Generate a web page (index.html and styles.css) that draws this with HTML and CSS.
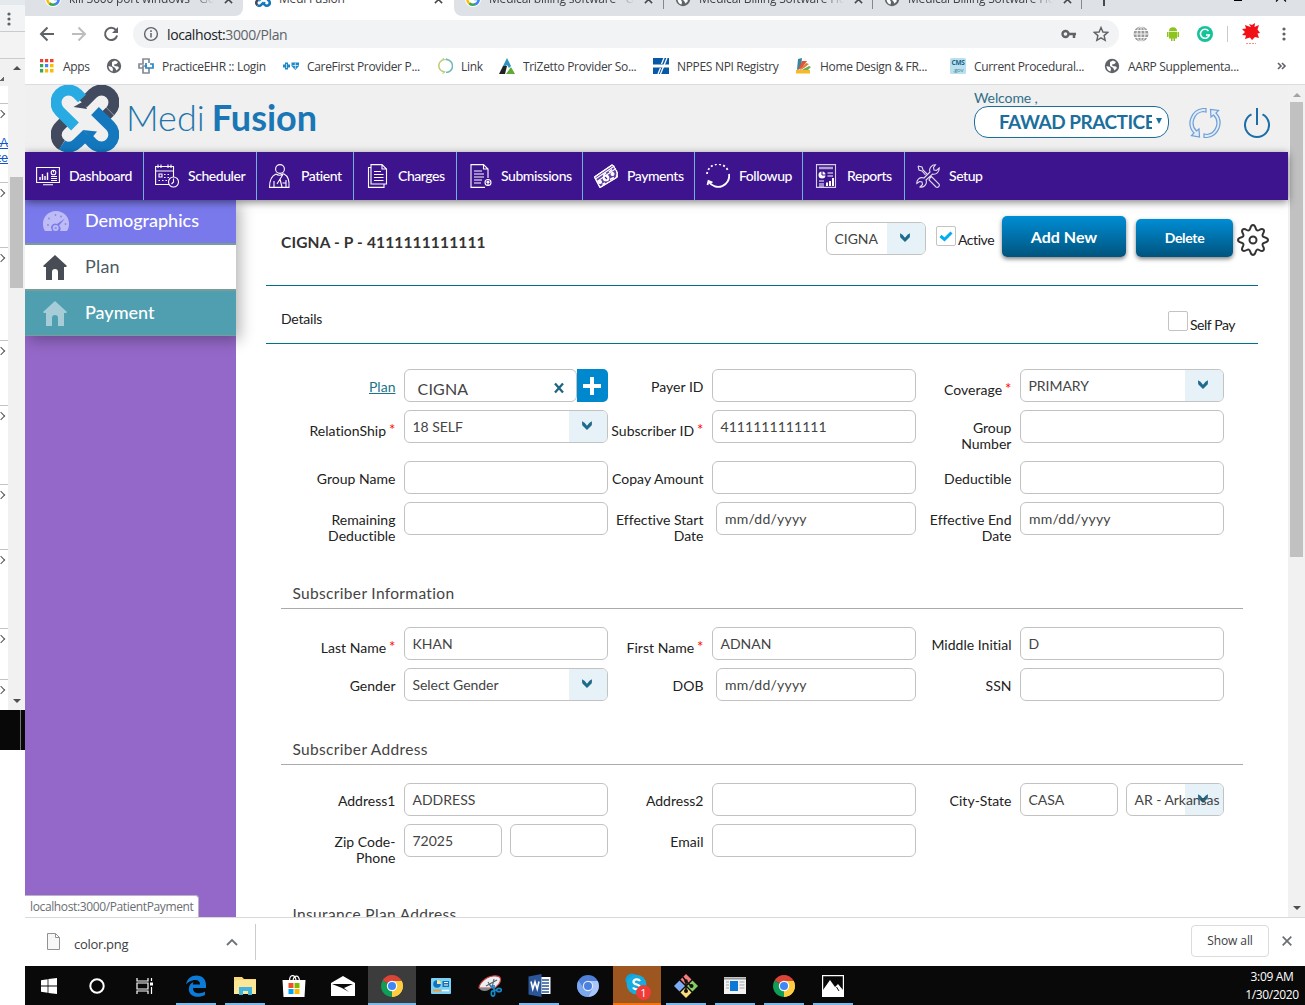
FILE: index.html
```html
<!DOCTYPE html>
<html lang="en">
<head>
<meta charset="utf-8">
<title>Medi Fusion</title>
<link rel="stylesheet" href="styles.css">
</head>
<body>
<svg class="defs" aria-hidden="true">
  <defs>
    <symbol id="chev" viewBox="0 0 12 10"><path d="M1 .3 L3.500 1.800 L6 4.800 L8.500 1.800 L11 .3 L10.800 4.200 L6 9 L1.200 4.200 Z" fill="#1f6b8c"/></symbol>
    <symbol id="globe" viewBox="0 0 16 16"><circle cx="8" cy="8" r="7.2" fill="#5f6368"/><path d="M2.5 8 L6 9 L7 11 L6.5 13.5 C4 13 2.5 10.5 2.500 8 Z M6 4 L9 2.500 L12 4 L10.500 6 L8 6.500 L8.500 8 L12 8.500 L13 10 L10.500 12.500 L9 9.800 L6 8 Z" fill="#fff"/></symbol>
    <symbol id="gsearch" viewBox="0 0 16 16"><circle cx="8" cy="8" r="8" fill="#fff"/><path d="M2.500 6.500 A6 6 0 0 0 6 13.500" stroke="#fbbc05" stroke-width="2.500" fill="none"/><path d="M4.500 12.500 A6 6 0 0 0 10.500 13.200" stroke="#34a853" stroke-width="2.500" fill="none"/><path d="M10 13.400 A6 6 0 0 0 13.800 8 H9" stroke="#4285f4" stroke-width="2.500" fill="none"/><path d="M3 6 A6 6 0 0 1 12 4" stroke="#ea4335" stroke-width="2.500" fill="none"/></symbol>
    <symbol id="close" viewBox="0 0 10 10"><path d="M1 1 L9 9 M9 1 L1 9" stroke="#45484c" stroke-width="1.700"/></symbol>
    <symbol id="mark" viewBox="0 0 68 67">
      <g fill="none" stroke-width="11">
        <path d="M59.300 26.300 A12.300 12.300 0 1 0 41.700 8.700 L32 18.500" stroke="#414a5e"/>
        <path d="M59 26.500 L52.500 33" stroke="#414a5e"/>
        <path d="M16.500 33.500 L9 41 A12 12 0 0 0 11 60" stroke="#414a5e"/>
        <path d="M31 13.500 L26.300 8.700 A12.300 12.300 0 1 0 8.700 26.300 L24 41.500" stroke="#28abe2"/>
        <path d="M44 26 L59.300 41 A12.300 12.300 0 1 1 41.700 58.300 L36 52.500" stroke="#1478bf"/>
        <path d="M11 60 A12 12 0 0 0 26.300 58.300 L36 49" stroke="#1478bf"/>
      </g>
      <path d="M22.500 22 L33 16 L36 24 Z" fill="#414a5e"/><path d="M32 45 L46 46.500 L40 54 Z" fill="#1478bf"/>
    </symbol>
    <symbol id="house" viewBox="0 0 24 25"><path d="M12 0 L24 11 L23 12 H21 V25 H15 V17 A3 3 0 0 0 9 17 V25 H3 V12 H1 L0 11 Z" fill="currentColor"/></symbol>
    <symbol id="chrome" viewBox="0 0 22 22"><path d="M11 11 L1.500 5.500 A11 11 0 0 1 20.500 5.500 Z" fill="#db4437"/><path d="M11 11 L20.500 5.500 A11 11 0 0 1 11 22 Z" fill="#ffcd40"/><path d="M11 11 V22 A11 11 0 0 1 1.500 5.500 Z" fill="#0f9d58"/><path d="M11 6 H20.700 A11 11 0 0 1 11 22 L15.500 13.500 Z" fill="#ffcd40"/><circle cx="11" cy="11" r="5.200" fill="#fff"/><circle cx="11" cy="11" r="4" fill="#4285f4"/></symbol>
  </defs>
</svg>
<div class="desktop">
  <aside class="behind">
    <div class="b-top"></div>
    <div class="b-tool"><svg width="6" height="14" viewBox="0 0 6 14" fill="#5f6368"><circle cx="3" cy="2" r="1.600"/><circle cx="3" cy="7" r="1.600"/><circle cx="3" cy="12" r="1.600"/></svg></div>
    <div class="b-gap"></div>
    <div class="b-page">
      <div class="b-list">
        <div class="b-corner"></div>
        <div class="b-head"></div>
        <div class="b-row r79"><i></i><span>eA</span><span>ze</span></div>
        <div class="b-row r65"><i></i></div>
        <div class="b-row r93"><i></i></div>
        <div class="b-row r65"><i></i></div>
        <div class="b-row r79"><i></i></div>
        <div class="b-row r65"><i></i></div>
        <div class="b-row r79"><i></i></div>
        <div class="b-row r51"><i></i></div>
        <div class="b-row r31"><i></i></div>
      </div>
      <div class="b-scroll"><b class="up"></b><div class="b-thumb"></div><b class="down"></b></div>
    </div>
    <div class="b-task"></div>
  </aside>

  <div class="window">
    <div class="tabstrip">
      <div class="tabs-left"><div class="tab"><svg><use href="#gsearch"/></svg><span class="fade t1">kill 3000 port windows - Goo</span><svg class="x"><use href="#close"/></svg></div></div>
      <div class="tab active"><svg><use href="#mark"/></svg><span>Medi Fusion</span><svg class="x"><use href="#close"/></svg></div>
      <div class="tabs-right">
        <div class="tab"><svg><use href="#gsearch"/></svg><span class="fade">Medical billing software - Go</span><svg class="x"><use href="#close"/></svg></div>
        <div class="tab sep"><svg><use href="#globe"/></svg><span class="fade">Medical Billing Software Hom</span><svg class="x"><use href="#close"/></svg></div>
        <div class="tab sep"><svg><use href="#globe"/></svg><span class="fade">Medical Billing Software Hom</span><svg class="x"><use href="#close"/></svg></div>
        <div class="newtab sep"><svg width="14" height="14"><path d="M7 0 V14 M0 7 H14" stroke="#45484c" stroke-width="2"/></svg></div>
        <div class="wincontrols"><svg width="60" height="10"><path d="M43 -1 L53 9 M53 -1 L43 9" transform="translate(0 .5)" stroke="#000" stroke-width="1.200" fill="none"/><path d="M1 8.500 H9" stroke="#000"/></svg></div>
      </div>
    </div>

    <div class="toolbar">
      <svg class="tb" viewBox="0 0 16 16"><path d="M15 8 H2 M8.500 1.500 L2 8 L8.500 14.500" fill="none" stroke="#5f6368" stroke-width="2"/></svg>
      <svg class="tb" viewBox="0 0 16 16"><path d="M1 8 H14 M7.500 1.500 L14 8 L7.500 14.500" fill="none" stroke="#bbbdc0" stroke-width="2"/></svg>
      <svg class="tb" viewBox="0 0 16 16"><path d="M13 4.200 A6.100 6.100 0 1 0 14.100 9.500" fill="none" stroke="#5f6368" stroke-width="2"/><path d="M15 1 V7 H9 Z" fill="#5f6368"/></svg>
      <div class="omnibox">
        <svg width="16" height="16" viewBox="0 0 16 16"><circle cx="8" cy="8" r="6.400" fill="none" stroke="#5f6368" stroke-width="1.400"/><path d="M8 7 V11.600 M8 4.300 V5.900" stroke="#5f6368" stroke-width="1.500"/></svg>
        <span class="url">localhost:<em>3000/Plan</em></span>
        <svg class="key" width="16" height="10" viewBox="0 0 16 10"><circle cx="4.500" cy="5" r="3" fill="none" stroke="#5f6368" stroke-width="2.400"/><path d="M7 5 H15 M13 5 V9" stroke="#5f6368" stroke-width="2.500"/></svg>
        <svg class="star" width="16" height="16" viewBox="0 0 16 16"><path d="M8 1.500 L9.900 6 L14.800 6.400 L11.100 9.600 L12.200 14.400 L8 11.900 L3.800 14.400 L4.900 9.600 L1.200 6.400 L6.100 6 Z" fill="none" stroke="#5f6368" stroke-width="1.400"/></svg>
      </div>
      <div class="exts">
        <svg viewBox="0 0 16 16" fill="none" stroke="#fff" stroke-width=".9"><circle cx="8" cy="8" r="7.500" fill="#9b9b9b" stroke="none"/><ellipse cx="8" cy="8" rx="4" ry="7.500"/><path d="M8 0 V16 M0 8 H16 M1 4.500 H15 M1 11.500 H15"/></svg>
        <svg viewBox="0 0 16 16" fill="#8fc31f"><path d="M4 6 V12.500 H6 V15 H7.500 V12.500 H8.500 V15 H10 V12.500 H12 V6 Z M2 6 H3.500 V11 H2 Z M12.500 6 H14 V11 H12.500 Z M4 5.300 A4 4 0 0 1 12 5.300 Z"/></svg>
        <svg viewBox="0 0 16 16"><circle cx="8" cy="8" r="8" fill="#15c39a"/><path d="M11.500 5 A4.500 4.500 0 1 0 12.300 9 H9" fill="none" stroke="#fff" stroke-width="1.600"/></svg>
        <i class="vline"></i>
        <svg class="flower" viewBox="0 0 20 22"><path d="M10 4 L8 1 L11 2 L14 0 L13.500 4 L18 2 L16.500 6.500 L19 10 L16.500 10.500 L18 15 L14 14 L11 17 L9 14.500 L4 16 L5 12.500 L1 12 L4 9 L1 6 L5 5.500 L4 2 L8 3.500 Z" fill="#f01016"/><path d="M5 20.500 H15" stroke="#ef8f90" stroke-dasharray="2 1"/></svg>
        <svg class="dots" viewBox="0 0 4 16" fill="#5f6368"><circle cx="2" cy="3" r="1.600"/><circle cx="2" cy="8" r="1.600"/><circle cx="2" cy="13" r="1.600"/></svg>
      </div>
    </div>

    <div class="bookmarks">
      <span><svg viewBox="0 0 16 16"><path d="M1 1h4v4H1zM6 1h4v4H6zM11 1h3.500v4H11z" fill="#ea4335"/><path d="M1 6h4v4H1zM1 11h4v3.500H1z" fill="#34a853"/><path d="M6 6h4v4H6z" fill="#4285f4"/><path d="M11 6h3.500v4H11zM6 11h4v3.500H6zM11 11h3.500v3.500H11z" fill="#fbbc05"/><path d="M5 0V16M10 0V16M0 5H16M0 10H16" stroke="#fff" stroke-width="1.600"/></svg>Apps</span>
      <span><svg><use href="#globe"/></svg></span>
      <span><svg viewBox="0 0 16 16" fill="none" stroke-width="1.700"><path d="M5 10 H1 V6 H5 V1 H11 V5" stroke="#868b92"/><path d="M11 10 V15 H5 V8 H9" stroke="#868b92"/><path d="M8 5 V10 H15 V6 H12" stroke="#2586c4"/></svg>PracticeEHR :: Login</span>
      <span><svg viewBox="0 0 16 16" fill="#1c87c9"><path d="M2 4.500h3v2h2v3H5v2H2v-2H0v-3h2z"/><path d="M8.500 4.500 H16 V8 L12.300 12 L8.500 8 Z"/><path d="M12.300 5 V11 M9.500 7.500 H15.500 M3.500 6 V10" stroke="#fff" stroke-width=".7"/></svg>CareFirst Provider P...</span>
      <span><svg viewBox="0 0 16 16" fill="none" stroke-width="1.500"><path d="M8 14 A6.300 6.300 0 0 1 7 1.500" stroke="#bccb74"/><path d="M9 1.500 A6.300 6.300 0 0 1 9 14.500" stroke="#6fbcb0"/><path d="M5.500 0 L8 2 L10.500 0 M5.500 16 L8 13.500" stroke="#a9cb8e" stroke-width="1"/></svg>Link</span>
      <span><svg viewBox="0 0 16 16"><path d="M8 0 L12 8 L10 10 L8 7 L6 9 L4 8 Z" fill="#2e93be"/><path d="M4 8 L8 8 L6 16 H0 Z" fill="#222"/><path d="M12 9 L16 16 H7 Z" fill="#5fa83a"/></svg>TriZetto Provider So...</span>
      <span><svg viewBox="0 0 16 16"><path d="M0 0 H16 V16 H0 Z" fill="#0759a5"/><path d="M0 8 H16" stroke="#fff" stroke-width="3"/><path d="M11 0 L8.500 6 M7.500 10 L5 16 M14 0 L7.500 16" stroke="#fff" stroke-width="1.300"/></svg>NPPES NPI Registry</span>
      <span><svg viewBox="0 0 16 16"><path d="M2 1 L6 0 L5 10 L1 12 Z" fill="#3587a0"/><path d="M6 3 L11 3 L6 10 L2 12 Z" fill="#dc573b"/><path d="M10 5 L13 6 L8 10 L3 13 Z" fill="#e27b3e"/><path d="M13 8 L15 9 L12 12 L4 13 Z" fill="#6daf55"/><path d="M0 12 H14 V15.500 H0 Z" fill="#f5b929"/></svg>Home Design &amp; FR...</span>
      <span><svg viewBox="0 0 16 16"><rect width="16" height="16" rx="1.500" fill="#b9e0ee"/><text x="8" y="7.300" font-size="6.500" font-weight="700" text-anchor="middle" fill="#1a6386" textLength="13">CMS</text><text x="8" y="13.500" font-size="6" text-anchor="middle" fill="#4c8198">.gov</text></svg>Current Procedural...</span>
      <span><svg><use href="#globe"/></svg>AARP Supplementa...</span>
      <svg class="more" viewBox="0 0 10 8"><path d="M1 1 L4 4 L1 7 M5 1 L8 4 L5 7" fill="none" stroke="#5f6368" stroke-width="1.600"/></svg>
    </div>

    <div class="viewport">
      <div class="page">
        <header class="brand">
          <svg class="mark"><use href="#mark"/></svg>
          <h1><span class="medi">Medi</span><b>Fusion</b></h1>
          <div class="account">
            <div class="welcome">Welcome ,</div>
            <div class="practice"><span>FAWAD PRACTICE</span><i></i></div>
          </div>
          <svg class="refresh" viewBox="0 0 32 32" fill="#e3edf9" stroke="#6f9fd6" stroke-width="1.200"><path d="M14 1.500 A14.600 14.600 0 0 0 5 26 L2.500 28.500 L10.500 30 L10 22 L7.500 24 A11.500 11.500 0 0 1 14 4.500 L17 5 V1.500 Z"/><path d="M18 30.500 A14.600 14.600 0 0 0 27 6 L29.500 3.500 L21.500 2.500 L22 10 L24.500 8 A11.500 11.500 0 0 1 18 27.500 L15 27 V30.500 Z"/></svg>
          <svg class="power" viewBox="0 0 26 30" fill="none" stroke="#1b6ea8" stroke-width="2"><path d="M13 0 V17 M7.500 6.300 A12 12 0 1 0 18.500 6.300"/></svg>
        </header>
        <nav class="mainnav">
          <a class="n1"><svg viewBox="0 0 24 24"><path d="M.6 3.500 H23.400 V18.500 H.6 Z M7 20.800 H17"/><path d="M4 16 V13 M6.500 16 V10 M9 16 V12 M11.500 16 V8.500" stroke-width="1.400"/><circle cx="17.500" cy="8.500" r="2.300"/><path d="M17.500 8.500 V6 M15 12.500 H21 M15 14.500 H21 M15 16.500 H21"/></svg><span>Dashboard</span></a>
          <a class="n2"><svg viewBox="0 0 24 24"><path d="M14 20.500 H.6 V2.500 H18.500 V13 M.6 7 H18.500 M3 .5 V4 M6 .5 V4 M13 .5 V4 M16 .5 V4"/><circle cx="18.500" cy="18" r="5"/><path d="M18.500 14.500 V18 L16.500 20"/><path d="M4 10 H7 V13 H4 Z"/><path d="M9 10.500 H16 M9 13.500 H14 M3.500 16.500 H12" stroke-dasharray="1.500 2"/></svg><span>Scheduler</span></a>
          <a class="n3"><svg viewBox="0 0 24 24"><circle cx="12" cy="5" r="4.400"/><path d="M8 10 C3 12 1.500 17 1.500 23.400 H21 C21.500 17 20 12 16 10 M8 10 C10 11.500 13 11.500 15.500 9.500 L9 20 M6 17 V23 M18 16 V23 M12 15 L14 23 M14.500 19 H18"/></svg><span>Patient</span></a>
          <a class="n4"><svg viewBox="0 0 24 24"><path d="M6 .6 H17 L21.500 5 V20 H6 Z M17 .6 V5 H21.500 M6 3.500 H3.500 V23.400 H19 V20"/><path d="M9 7.500 H16 M9 10.500 H18.500 M9 13.500 H18.500 M9 16.500 H18.500"/></svg><span>Charges</span></a>
          <a class="n5"><svg viewBox="0 0 24 24"><path d="M17 23.400 H3 V.6 H15.500 L20 5 V14 M15.500 .6 V5 H20"/><path d="M6 7 H14 M6 10 H16 M6 13 H16 M6 16 H14 M6 19 H13"/><circle cx="20" cy="18.500" r="3"/><path d="M20 22 V17 M18.500 18.500 L20 17 L21.500 18.500"/></svg><span>Submissions</span></a>
          <a class="n6"><svg viewBox="0 0 24 24" stroke-width=".8"><path d="M.5 13 L18 1 L19.500 2 L23.500 9 L22 14 L6 23.500 Z" fill="#fff" fill-opacity=".18"/><path d="M.5 13 L18.500 .7 M1.500 15 L20.500 2 M3 17.500 L22 4.500 M6 23.500 L23.500 13 L22.500 6 M.5 13 L6 23.500"/><circle cx="12" cy="14" r="2.800" fill="#fff"/><path d="M11 13 L13 15" stroke="#3d148e"/><circle cx="6" cy="18" r="1.500" fill="#fff"/><circle cx="18.500" cy="10" r="1.500" fill="#fff"/><path d="M8.500 20.500 L11 19 M16 15.500 L20 13.500 M9 11.500 L12 9 M15 8 L18 5.500" stroke-width="1.600"/></svg><span>Payments</span></a>
          <a class="n7"><svg class="bold" viewBox="0 0 24 24"><path d="M1 10 A11 11 0 0 1 22.500 8" stroke-dasharray="2 2.300"/><path d="M23 10 A11 11 0 0 1 3 18 M1.500 21 L2.500 17 L6.500 18.500"/></svg><span>Followup</span></a>
          <a class="n8"><svg viewBox="0 0 24 24"><path d="M2.500 .6 H21.500 V23.400 H2.500 Z" stroke-opacity=".8"/><path d="M5 4 H19" stroke-width="2.500" stroke-opacity=".6"/><circle cx="8" cy="11" r="3.500" fill="#fff" stroke="none"/><path d="M8 11 V7 M8 11 H12" stroke="#3d148e"/><path d="M13.500 9 H19 M13.500 12 H19 M5 17 H10 M5 20 H10 M5 22 H10"/><path d="M13 22 V18.500 M16 22 V17 M19 22 V14" stroke-width="2"/></svg><span>Reports</span></a>
          <a class="n9"><svg viewBox="0 0 24 24"><path d="M2 2 L6 3 L7 6 L11 10 M2 2 L3 6 L6 7 L9.500 11 M14 14 L15.500 12.500 L23 20 A2.200 2.200 0 0 1 20 23 L13 16 Z M19.500 .8 C16 .5 12.500 4 14 8 L8 14 C3.500 12.500 .5 16 .8 19.500 L3.500 17.500 L6 18 L6.500 20.500 L4 23 C8.500 24 11.500 19.500 10 16 L16.500 10 C20 11 23.500 8 23.200 4 L20.500 6.500 L18 6 L17.500 3.500 Z" stroke-opacity=".85"/></svg><span>Setup</span></a>
        </nav>
        <div class="below">
          <div class="sidebar">
            <div class="menu">
              <a class="m1"><svg class="gauge" viewBox="0 0 26 21" fill="#fff" fill-opacity=".5"><path fill-rule="evenodd" d="M2 20 C-1.500 14 0 8 3 4.500 C8 -1.500 18 -1.500 23 4.500 C26 8 27.500 14 24 20 H17 A4.500 4.500 0 0 0 16 14.500 L22 7.500 L14 13 A4 4 0 0 0 9 19 V20 Z"/><g fill="#5552b8"><circle cx="5" cy="14" r=".9"/><circle cx="6" cy="7.500" r=".9"/><circle cx="12.500" cy="4" r=".9"/><circle cx="18" cy="5.500" r=".9"/><circle cx="22.500" cy="13" r=".9"/></g><circle cx="12.700" cy="17" r="3"/><circle cx="12.700" cy="17" r="1.200" fill="#6d68dd"/></svg><span>Demographics</span></a>
              <a class="m2"><svg><use href="#house"/></svg><span>Plan</span></a>
              <a class="m3"><svg><use href="#house"/></svg><span>Payment</span></a>
            </div>
          </div>
          <main>
            <section class="titlebar">
              <h2>CIGNA - P - 4111111111111</h2>
              <div class="field select plansel">CIGNA<i><svg><use href="#chev"/></svg></i></div>
              <label class="check act"><b><svg viewBox="0 0 14 11"><path d="M1.500 5 L5.500 8.500 L12.500 1.500" fill="none" stroke="#00adef" stroke-width="3"/></svg></b>Active</label>
              <div class="btn add">Add New</div>
              <div class="btn del">Delete</div>
              <svg class="gear" viewBox="0 0 32 32" fill="none" stroke="#333" stroke-width="2"><path d="M13.200 4.500 C13.800 2.200 14.800 1 16 1 S18.200 2.200 18.800 4.500 C19.400 6.700 20.600 6.900 22.200 6 C24 4.900 25.600 4.900 26.400 5.600 S27.100 8 26 9.800 C25.100 11.400 25.300 12.600 27.500 13.200 C29.800 13.800 31 14.800 31 16 S29.800 18.200 27.500 18.800 C25.300 19.400 25.100 20.600 26 22.200 C27.100 24 27.100 25.600 26.400 26.400 S24 27.100 22.200 26 C20.600 25.100 19.400 25.300 18.800 27.500 C18.200 29.800 17.200 31 16 31 S13.800 29.800 13.200 27.500 C12.600 25.300 11.400 25.100 9.800 26 C8 27.100 6.400 27.100 5.600 26.400 S4.900 24 6 22.200 C6.900 20.600 6.700 19.400 4.500 18.800 C2.200 18.200 1 17.200 1 16 S2.200 13.800 4.500 13.200 C6.700 12.600 6.900 11.400 6 9.800 C4.900 8 4.900 6.400 5.600 5.600 S8 4.900 9.800 6 C11.400 6.900 12.600 6.700 13.200 4.500 Z"/><circle cx="16" cy="16" r="3.500"/></svg>
            </section>
            <section class="details"><span>Details</span><label class="check"><b></b>Self Pay</label></section>

            <div class="grid first">
              <label><a>Plan</a></label><div class="combo"><div class="field big">CIGNA<svg viewBox="0 0 12 12"><path d="M2 1.500 L10 10.500 M10 1.500 L2 10.500" stroke="#1f6484" stroke-width="2.300"/></svg></div><div class="plus"><svg viewBox="0 0 18 18"><path d="M9 0 V18 M0 9 H18" stroke="#fff" stroke-width="4"/></svg></div></div>
              <label>Payer ID</label><div class="field"></div>
              <label class="req">Coverage<sup>*</sup></label><div class="field select">PRIMARY<i><svg><use href="#chev"/></svg></i></div>
              <label class="req">RelationShip<sup>*</sup></label><div class="field select">18 SELF<i><svg><use href="#chev"/></svg></i></div>
              <label class="req">Subscriber ID<sup>*</sup></label><div class="field num">4111111111111</div>
              <label class="two">Group<br>Number</label><div class="field"></div>
              <label>Group Name</label><div class="field"></div>
              <label>Copay Amount</label><div class="field"></div>
              <label>Deductible</label><div class="field"></div>
              <label class="two">Remaining<br>Deductible</label><div class="field"></div>
              <label class="two">Effective Start<br>Date</label><div class="field date short">mm/dd/yyyy</div>
              <label class="two">Effective End<br>Date</label><div class="field date">mm/dd/yyyy</div>
            </div>

            <h3>Subscriber Information</h3>
            <div class="grid">
              <label class="req">Last Name<sup>*</sup></label><div class="field">KHAN</div>
              <label class="req">First Name<sup>*</sup></label><div class="field">ADNAN</div>
              <label>Middle Initial</label><div class="field">D</div>
              <label>Gender</label><div class="field select">Select Gender<i><svg><use href="#chev"/></svg></i></div>
              <label>DOB</label><div class="field date short">mm/dd/yyyy</div>
              <label>SSN</label><div class="field"></div>
            </div>

            <h3>Subscriber Address</h3>
            <div class="grid">
              <label>Address1</label><div class="field">ADDRESS</div>
              <label>Address2</label><div class="field"></div>
              <label>City-State</label><div class="pair"><div class="field">CASA</div><div class="field select over"><span>AR - Arkansas</span><i><svg><use href="#chev"/></svg></i></div></div>
              <label class="two">Zip Code-<br>Phone</label><div class="pair"><div class="field">72025</div><div class="field"></div></div>
              <label>Email</label><div class="field"></div>
            </div>
            <h3>Insurance Plan Address</h3>
          </main>
        </div>
      </div>
      <div class="scrollbar"><b class="up"></b><div class="thumb"></div><b class="down"></b></div>
      <div class="status">localhost:3000/PatientPayment</div>
    </div>

    <footer class="downloads">
      <svg class="file" viewBox="0 0 13 17"><path d="M.5 .5 H8.500 L12.500 4.500 V16.500 H.5 Z M8.500 .5 V4.500 H12.500" fill="#f7f7f7" stroke="#909396"/></svg>
      <span class="fname">color.png</span>
      <svg class="caret" viewBox="0 0 12 8"><path d="M1 7 L6 2 L11 7" fill="none" stroke="#6f7377" stroke-width="1.800"/></svg>
      <i class="divider"></i>
      <div class="showall">Show all</div>
      <svg class="dx" viewBox="0 0 10 10"><path d="M.7 .7 L9.300 9.300 M9.300 .7 L.7 9.300" stroke="#6b6f73" stroke-width="1.700"/></svg>
    </footer>

    <div class="taskbar">
      <div class="cell"><svg width="16" height="16" viewBox="0 0 16 16" fill="#fff"><path d="M0 2.200 L6.600 1.200 V7.600 H0 Z M7.400 1.100 L16 0 V7.600 H7.400 Z M0 8.400 H6.600 V14.800 L0 13.800 Z M7.400 8.400 H16 V16 L7.400 14.900 Z"/></svg></div>
      <div class="cell"><svg width="16" height="16"><circle cx="8" cy="8" r="6.700" fill="none" stroke="#fff" stroke-width="2"/></svg></div>
      <div class="cell gapafter"><svg width="18" height="16" viewBox="0 0 18 16" fill="none" stroke="#fff" stroke-width="1.200"><path d="M1 0 V3 H12 V0 M1 5 H12 V11 H1 Z M1 16 V13 H12 V16 M15.500 0 V3 M15.500 9 V16"/><path d="M14 4.500 H17 V7.500 H14 Z" fill="#fff" stroke="none"/></svg></div>
      <div class="cell run"><svg width="22" height="22" viewBox="0 0 22 22"><path d="M1 9.500 C2 3.500 6.500 .5 11.500 .5 C17.500 .5 21 4.500 21 10 V13 H8 C8 17 11 18.300 14 18.300 C16.500 18.300 18.500 17.500 20 16.600 V20 C18 21.200 15.500 21.800 13 21.800 C7 21.800 3.800 18.500 3.800 14 C3.800 10.500 6 8 8.500 7 C8 8 7.900 9 7.900 9.500 H15 C15 6.500 13.500 5 10.500 5 C6 5 2.500 7.500 1 9.500 Z" fill="#0a7bd8"/></svg></div>
      <div class="cell run"><svg width="22" height="20" viewBox="0 0 22 20"><path d="M0 1 H8 L10 3 H22 V18 H0 Z" fill="#f8d775"/><path d="M2 4 H22 V18 H0 V6 Z" fill="#fce697"/><path d="M5 19 V11 H18 V19 H14 V15 H9 V19 Z" fill="#3fb4e2"/></svg></div>
      <div class="cell"><svg width="24" height="24" viewBox="0 0 24 24"><path d="M7.500 7 C7.500 0 13 0 14 6 M11 7 C11.500 1 17 0 17.500 7" fill="none" stroke="#fff" stroke-width="1.200"/><path d="M.5 6 H23.500 L22.500 23 H1.500 Z" fill="#fff"/><path d="M6.500 9h5v5h-5z" fill="#f25022"/><path d="M12.500 9h5v5h-5z" fill="#7fba00"/><path d="M6.500 15h5v5h-5z" fill="#00a4ef"/><path d="M12.500 15h5v5h-5z" fill="#ffb900"/></svg></div>
      <div class="cell"><svg width="24" height="20" viewBox="0 0 24 20"><path d="M0 7 L12 0 L24 7 V20 H0 Z" fill="#fff"/><path d="M1 8 L22 8 L13 12 L18 16 L11 12 Z" fill="#0b0b0b"/></svg></div>
      <div class="cell current"><svg width="22" height="22"><use href="#chrome"/></svg></div>
      <div class="cell"><svg width="20" height="16" viewBox="0 0 20 16"><rect width="20" height="16" rx="1" fill="#7cd2f5"/><circle cx="6" cy="6" r="3.800" fill="#0d74c4"/><path d="M6 6 V2 A4 4 0 0 1 10 6 Z" fill="#ffe196"/><path d="M11.500 3 H18 V9 H11.500 Z" fill="#1471b5"/><path d="M13 4.500 H17 M13 7 H17" stroke="#fff"/><path d="M2 12.500 H10" stroke="#f39a36" stroke-width="2"/><path d="M11 12.500 H18" stroke="#fff" stroke-width="1.500"/></svg></div>
      <div class="cell"><svg width="24" height="22" viewBox="0 0 24 22"><path d="M1 13 C1 9 7 2 15 1 C23 0 24 4 21 9 L17 13 H4 Z" fill="#eceff1" stroke="#c9403c" stroke-width="1.200"/><path d="M1 13 C3 17 10 17 13 13 Z" fill="#85898d"/><path d="M8 11 L19 5 M14 13 L16 4 M13 12 L10 7" stroke="#585e63" stroke-width="1.100"/><g fill="none" stroke="#1688c8" stroke-width="1.700"><path d="M12 10 L18 16 M16 10 V16"/><ellipse cx="15" cy="18.500" rx="1.700" ry="2.600"/><ellipse cx="21" cy="15" rx="2.300" ry="1.700"/></g></svg></div>
      <div class="cell run"><svg width="23" height="23" viewBox="0 0 23 23"><path d="M12 3 H22.500 V20 H12 Z" fill="#fff"/><path d="M14 6 H21 M14 9 H21 M14 12 H21 M14 15 H21 M14 18 H21" stroke="#2b579a" stroke-width="1.300"/><path d="M.5 2.500 L13.500 0 V23 L.5 20.500 Z" fill="#2b579a"/><path d="M3 7.500 L4.800 15 L7 8 L9.200 15 L11 7.500" fill="none" stroke="#fff" stroke-width="1.600"/></svg></div>
      <div class="cell"><svg width="22" height="22" viewBox="0 0 22 22"><circle cx="11" cy="11" r="11" fill="#4f7fd9"/><path d="M11 6 H20.700 A11 11 0 0 1 11 22 L15.500 13.500 Z" fill="#a9c7fa"/><path d="M1.500 5.500 A11 11 0 0 0 11 22 L15 14 L6.500 13 Z" fill="#7ba7ef"/><circle cx="11" cy="11" r="5.200" fill="#e1ebfc"/><circle cx="11" cy="11" r="4" fill="#4b81dc"/></svg></div>
      <div class="cell alert"><svg width="24" height="24" viewBox="0 0 24 24"><circle cx="7" cy="7" r="6.500" fill="#0fa1dc"/><circle cx="15.500" cy="16" r="6.500" fill="#0fa1dc"/><circle cx="11.500" cy="11.500" r="9.800" fill="#16acdf"/><path d="M15 8 C13.500 5.500 8.500 6 8.500 9 C8.500 12 15 11 15 14 C15 17 9.500 17 8 14.500" fill="none" stroke="#fff" stroke-width="2.300"/></svg><span class="badge">1</span></div>
      <div class="cell run"><svg width="24" height="24" viewBox="0 0 24 24"><path d="M12 0 L17.500 5.500 L12 11 L6.500 5.500 Z" fill="#f27d7b"/><path d="M5.500 6.500 L11 12 L5.500 17.500 L0 12 Z" fill="#7fabf5"/><path d="M18.500 6.500 L24 12 L18.500 17.500 L13 12 Z" fill="#86cd63"/><path d="M12 13 L17.500 18.500 L12 24 L6.500 18.500 Z" fill="#fadb7b"/><path d="M8 2 L12 7 V17 M12 7 L17 12" fill="none" stroke="#111" stroke-width="1.600"/><g fill="#111"><circle cx="12" cy="7" r="1.800"/><circle cx="12" cy="17" r="2"/><circle cx="17.500" cy="12" r="2"/></g></svg></div>
      <div class="cell run"><svg width="22" height="17" viewBox="0 0 22 17"><path d="M0 0 H22 V17 H0 Z" fill="#f2f2f2"/><path d="M0 1.500 H22" stroke="#989898" stroke-width="2"/><path d="M6 4 H14 V14 H6 Z" fill="#0a78d7"/><path d="M2 5 H5 M2 8 H5 M2 11 H5 M15.500 5 H20.500 M15.500 8 H20.500 M15.500 11 H20.500" stroke="#a5a5a5"/></svg></div>
      <div class="cell run"><svg width="22" height="22"><use href="#chrome"/></svg></div>
      <div class="cell run"><svg width="22" height="22" viewBox="0 0 22 22"><path d="M.6 .6 H21.400 V21.400 H.6 Z" fill="#080808" stroke="#fff" stroke-width="1.200"/><path d="M1 15 L8 5 L13 12 L16 9 L21 15 V21 H1 Z" fill="#fff"/><path d="M14.500 12 L17 16" stroke="#080808"/></svg></div>
      <div class="clock"><div>3:09 AM</div><div>1/30/2020</div></div>
    </div>
  </div>
</div>
</body>
</html>
```
FILE: styles.css
```css
* { box-sizing: border-box; }
body { margin: 0; width: 1305px; height: 1005px; overflow: hidden; background: #fff; font-family: Lato, "Liberation Sans", sans-serif; color: #222; }
svg { display: block; flex: none; }
.defs { width: 0; height: 0; position: absolute; }
.desktop { display: flex; height: 1005px; }

/* window partly covered on the left */
.behind { width: 25px; flex: none; display: flex; flex-direction: column; overflow: hidden; }
.b-top { height: 5px; background: #e4e9ed; }
.b-tool { height: 27px; background: #f1f3f4; border-bottom: 1px solid #c9cbcd; padding: 7px 0 0 6px; }
.b-gap { height: 27px; background: #f3f3f3; border-bottom: 1px solid #c9cbcd; }
.b-page { height: 651px; display: flex; }
.b-list { width: 8px; overflow: hidden; }
.b-corner { height: 27px; background: linear-gradient(135deg, transparent 50%, #666 50%) no-repeat 0 18px / 4px 4px #f1f1f1; }
.b-head { height: 17px; }
.b-row { border-top: 1px solid #c4c4c4; overflow: hidden; }
.b-row i { display: block; width: 6px; height: 6px; margin: 7px 0 0 -2px; border: solid #555; border-width: 1px 1px 0 0; transform: rotate(45deg); }
.b-row span { display: flex; justify-content: flex-end; width: 8px; font: 12px/15px "Liberation Sans", sans-serif; color: #1155cc; text-decoration: line-through underline; }
.b-row i + span { margin-top: 19px; }
.r79 { height: 79px; } .r65 { height: 65px; } .r93 { height: 93px; } .r51 { height: 51px; } .r31 { height: 31px; }
.b-scroll { width: 17px; background: #f1f1f1; display: flex; flex-direction: column; align-items: center; padding: 7px 0; }
.b-thumb { width: 13px; height: 111px; background: #c1c1c1; margin: 107px 0 auto; }
.up, .down { width: 0; height: 0; border: solid transparent; border-width: 0 4px; }
.up { border-bottom: 4px solid #505050; }
.down { border-top: 4px solid #505050; }
.b-task { height: 40px; background: linear-gradient(90deg, #080808 20px, #777 20px 21px, #080808 21px); }

.window { width: 1280px; display: flex; flex-direction: column; }
.tabstrip, .toolbar, .bookmarks, .omnibox, .status, .downloads, .taskbar { font-family: "Open Sans", "Noto Sans", sans-serif; }

/* tabs: the upper half of the strip lies above the screen edge */
.tabstrip { display: flex; height: 34px; margin-top: -18px; background: #fff; flex: none; font-size: 12px; color: #3f4246; letter-spacing: -.2px; }
.tabs-left { width: 218px; background: #dee1e6; border-radius: 0 0 8px 0; padding-left: 10px; }
.tabs-right { width: 851px; background: #dee1e6; border-radius: 0 0 0 8px; display: flex; padding-left: 1px; }
.tab { width: 208px; height: 34px; display: flex; align-items: center; padding-left: 10px; flex: none; }
.tab.active { width: 211px; padding-left: 12px; }
.tab.sep { width: 209px; padding-left: 12px; }
.tab svg { width: 16px; height: 16px; margin-right: 8px; }
.tab span { width: 145px; white-space: nowrap; overflow: hidden; line-height: 20px; }
.tab svg.x { width: 9px; height: 9px; margin: 0 0 0 10px; }
.fade { -webkit-mask-image: linear-gradient(90deg, #000 85%, transparent); mask-image: linear-gradient(90deg, #000 85%, transparent); }
.sep { background: linear-gradient(#85888c, #85888c) no-repeat 0 0 / 1px 27px; }
.newtab { width: 60px; height: 34px; padding: 10px 0 0 16px; }
.wincontrols { padding: 10px 0 0 92px; }

/* toolbar */
.toolbar { height: 36px; flex: none; display: flex; align-items: center; padding: 4px 19px 4px 14px; background: #fff; }
.tb { width: 16px; height: 16px; margin-right: 16px; }
.omnibox { width: 987px; height: 28px; margin-left: -2px; border-radius: 14px; background: #f1f3f4; display: flex; align-items: center; padding: 0 10px; font-size: 14px; letter-spacing: -.4px; color: #202124; }
.url { flex: 1; padding-left: 8px; }
.url em { font-style: normal; color: #5f6368; }
.key { margin-right: 16px; }
.exts { display: flex; align-items: center; padding-left: 14px; }
.exts svg { width: 16px; height: 16px; margin-right: 16px; }
.vline { width: 1px; height: 16px; background: #c8cacc; margin-right: 13px; margin-left: -2px; }
.exts .flower { width: 20px; height: 22px; margin-right: 21px; }
.exts .dots { width: 4px; height: 16px; margin: 0; }

.bookmarks { height: 33px; flex: none; border-bottom: 1px solid #dadce0; padding: 0 0 4px 14px; display: grid; grid-template-columns: 67px 32px 145px 154px 62px 154px 143px 154px 154px 173px 12px; align-items: center; font-size: 12px; letter-spacing: -.32px; color: #3c4043; }
.bookmarks span { display: flex; align-items: center; white-space: nowrap; }
.bookmarks span svg { width: 16px; height: 16px; margin-right: 8px; }
.bookmarks .more { width: 10px; height: 8px; }

/* page */
.viewport { height: 832px; flex: none; display: flex; position: relative; overflow: hidden; }
.page { width: 1263px; }
.brand { height: 67px; background: #f0f0f0; display: flex; padding-left: 26px; }
.mark { width: 68px; height: 67px; }
h1 { margin: 10px 0 0 7px; width: 848px; font-size: 36px; line-height: 44px; font-weight: 300; color: #1f75aa; display: flex; gap: 7px; }
h1 b { font-weight: 700; color: #1a76b5; }
.account { width: 195px; color: #2f6f88; font-size: 14px; }
.welcome { height: 21px; line-height: 25px; letter-spacing: -.1px; }
.practice { height: 32px; border: 1px solid #1b6d9c; border-radius: 14px; background: #fff; display: flex; align-items: center; padding: 0 0 2px 24px; font-size: 19px; font-weight: 700; color: #1b6f9c; letter-spacing: -.5px; }
.practice span { width: 153px; overflow: hidden; white-space: nowrap; }
.practice i { border: solid transparent; border-width: 0 3px; border-top: 6px solid #1b6f9c; margin-left: 4px; }
.refresh { width: 32px; height: 32px; margin: 22px 22px 0 20px; }
.power { width: 26px; height: 30px; margin-top: 23px; margin-left: 1px; }

.mainnav { height: 48px; background: #3d148e; display: flex; box-shadow: 0 2px 8px rgba(0, 0, 0, .5); position: relative; z-index: 2; }
.mainnav a { display: flex; align-items: center; gap: 9px; padding-left: 11px; border-right: 1px solid #6fb3d9; color: #fff; font-size: 14px; font-weight: 500; white-space: nowrap; letter-spacing: -.45px; }
.mainnav span { margin-top: -2px; }
.mainnav svg { width: 24px; height: 24px; fill: none; stroke: #fff; stroke-width: 1.100; }
.mainnav svg.bold { stroke-width: 1.800; }
.n1 { width: 119px; } .n2 { width: 113px; } .n3 { width: 97px; } .n4 { width: 103px; } .n5 { width: 126px; } .n6 { width: 112px; } .n7 { width: 108px; } .n8 { width: 102px; }
.mainnav .n9 { border: 0; }

.below { display: flex; height: 717px; }
.sidebar { width: 211px; background: #9468c8; flex: none; }
.menu { box-shadow: 4px 4px 14px rgba(0, 0, 0, .3); }
.menu a { display: flex; align-items: center; height: 46px; border-bottom: 2px solid #789d97; padding-left: 18px; font-size: 18px; font-weight: 500; color: #fff; }
.menu svg { width: 24px; height: 25px; margin-right: 18px; }
.menu span { margin-top: -2px; }
.menu .gauge { width: 26px; height: 21px; margin-right: 16px; }
.menu .m1 { height: 45px; background: #7a79ec; padding-bottom: 1px; }
.menu .m2 { background: #fff; color: #4b5b66; font-weight: 400; letter-spacing: .2px; }
.m2 svg { color: #474c55; }
.menu .m3 { height: 45px; border-bottom-width: 1px; background: #4f9fb1; }
.m3 svg { color: #a6cdd7; }

main { width: 1052px; padding: 0 30px; }
.titlebar { height: 86px; border-bottom: 1px solid #00708f; display: flex; align-items: flex-start; padding-left: 15px; }
h2 { margin: 32px 0 0; width: 545px; font-size: 15.500px; line-height: 20px; font-weight: 700; color: #333; letter-spacing: .15px; }
.plansel { width: 100px; margin-top: 22px; }
.check { display: flex; font-size: 14px; line-height: 28px; gap: 2px; color: #222; letter-spacing: -.45px; }
.check b { width: 20px; height: 20px; border: 1px solid #c3c3c3; border-radius: 2px; background: #fff; }
.check b svg { width: 14px; height: 11px; margin: 4px 0 0 2px; }
.act { margin: 26px 0 0 10px; width: 66px; }
.btn { background: linear-gradient(#008dd5, #00547d); border-radius: 5px; box-shadow: 0 2px 4px rgba(0, 0, 0, .5); color: #fff; font-weight: 700; display: flex; align-items: center; justify-content: center; }
.add { width: 124px; height: 41px; margin-top: 16px; font-size: 16px; }
.del { width: 97px; height: 38px; margin: 19px 0 0 10px; font-size: 14px; letter-spacing: -.3px; padding-bottom: 1px; }
.gear { width: 32px; height: 32px; margin: 24px -20px 0 4px; }
.details { height: 58px; border-bottom: 1px solid #00708f; display: flex; justify-content: space-between; padding: 25px 23px 0 15px; font-size: 14px; line-height: 16px; letter-spacing: -.2px; }

.grid { margin-left: 34px; display: grid; grid-template-columns: repeat(3, 104px 204px); row-gap: 8px; font-size: 14px; align-items: start; }
.grid.first { margin-top: 25px; }
.grid label { height: 33px; text-align: right; padding: 10px 8.500px 0 0; line-height: 16px; white-space: nowrap; color: #222; letter-spacing: .02px; }
.grid label.req { padding-top: 13px; }
.grid label a { color: #1b7489; text-decoration: underline; }
.grid label.two { height: 42px; }
.grid.first label.two { height: 43px; }
sup { color: #f00; font-size: 15px; line-height: 0; vertical-align: 1px; margin-left: 3px; }
.field { height: 33px; border: 1px solid #c2c2c2; border-radius: 6px; padding-left: 7.500px; font-size: 14px; line-height: 31px; color: #444; background: #fff; position: relative; overflow: hidden; white-space: nowrap; }
.num { letter-spacing: .05px; }
.select { display: flex; justify-content: space-between; letter-spacing: -.05px; }
.select i { width: 38px; background: #e7f2f8; padding: 10px 0 0 12px; }
.select i svg { width: 12px; height: 10px; }
.short { margin-left: 4px; }
.date { letter-spacing: .22px; padding-left: 8px; }
.combo { display: flex; }
.big { width: 173px; font-size: 16px; line-height: 38px; padding: 0 11px 0 12.500px; display: flex; justify-content: space-between; letter-spacing: .2px; }
.big svg { width: 12px; height: 12px; margin: 12px 0 0; }
.plus { width: 31px; height: 33px; background: #0088cf; border-radius: 0 5px 5px 0; padding: 8px 0 0 6px; }
.plus svg { width: 18px; height: 18px; }
.pair { display: grid; grid-template-columns: 98px 98px; gap: 8px; }
.over span { position: relative; z-index: 1; }
.over i { position: absolute; right: 0; top: 0; height: 31px; }

h3 { margin: 36px 0 18px 15px; width: 962px; height: 28px; padding-left: 11.500px; border-bottom: 1px solid #aaa; font-size: 15.500px; line-height: 24px; font-weight: 400; color: #444; letter-spacing: .33px; }

.scrollbar { width: 17px; background: #f1f1f1; display: flex; flex-direction: column; align-items: center; padding: 8px 0 7px; }
.scrollbar .up { border-bottom-color: #a3a3a3; }
.thumb { width: 13px; height: 455px; background: #c1c1c1; margin: 5px 0 auto; }
.status { position: absolute; left: 0; bottom: 0; width: 174px; height: 22px; background: #fff; border: 1px solid #b9b4c4; border-width: 1px 1px 0 0; border-radius: 0 4px 0 0; font-size: 12px; line-height: 21px; padding-left: 5px; color: #6a6e72; letter-spacing: -.37px; z-index: 3; white-space: nowrap; }

.downloads { height: 49px; flex: none; border-top: 1px solid #d9d9d9; display: flex; align-items: center; padding-left: 22px; background: #fff; color: #3c4043; }
.file { width: 13px; height: 17px; margin-top: -2px; }
.fname { font-size: 13px; width: 166px; padding-left: 14px; padding-top: 4px; letter-spacing: -.3px; }
.caret { width: 12px; height: 8px; margin-right: 17px; }
.divider { width: 1px; height: 36px; background: #ccc; }
.showall { width: 78px; height: 32px; margin: -2px 0 0 935px; border: 1px solid #dadce0; border-radius: 4px; font-size: 12px; font-weight: 500; line-height: 30px; text-align: center; letter-spacing: -.1px; }
.dx { width: 10px; height: 10px; margin: -2px 0 0 13px; }

.taskbar { height: 39px; flex: none; background: #090909; display: flex; color: #fff; }
.cell { width: 48px; height: 39px; display: flex; align-items: center; justify-content: center; position: relative; margin-right: 1px; flex: none; }
.cell:nth-child(-n+2) { margin-right: 0; }
.cell.gapafter { margin-right: 3px; }
.run { background: linear-gradient(#76b9ed, #76b9ed) no-repeat 4px 37px / 40px 2px; }
.current { background: #3c3c3c; border-bottom: 2px solid #76b9ed; padding-top: 2px; }
.alert { background: #9d5620; border-bottom: 2px solid #f7740c; }
.badge { position: absolute; left: 23px; top: 19px; width: 15px; height: 15px; border-radius: 50%; background: #f03c38; font-size: 11px; line-height: 15px; text-align: center; }
.clock { margin-left: auto; width: 60px; text-align: center; font-size: 12px; line-height: 18px; padding-top: 2px; letter-spacing: -.35px; margin-right: 3px; }
```
